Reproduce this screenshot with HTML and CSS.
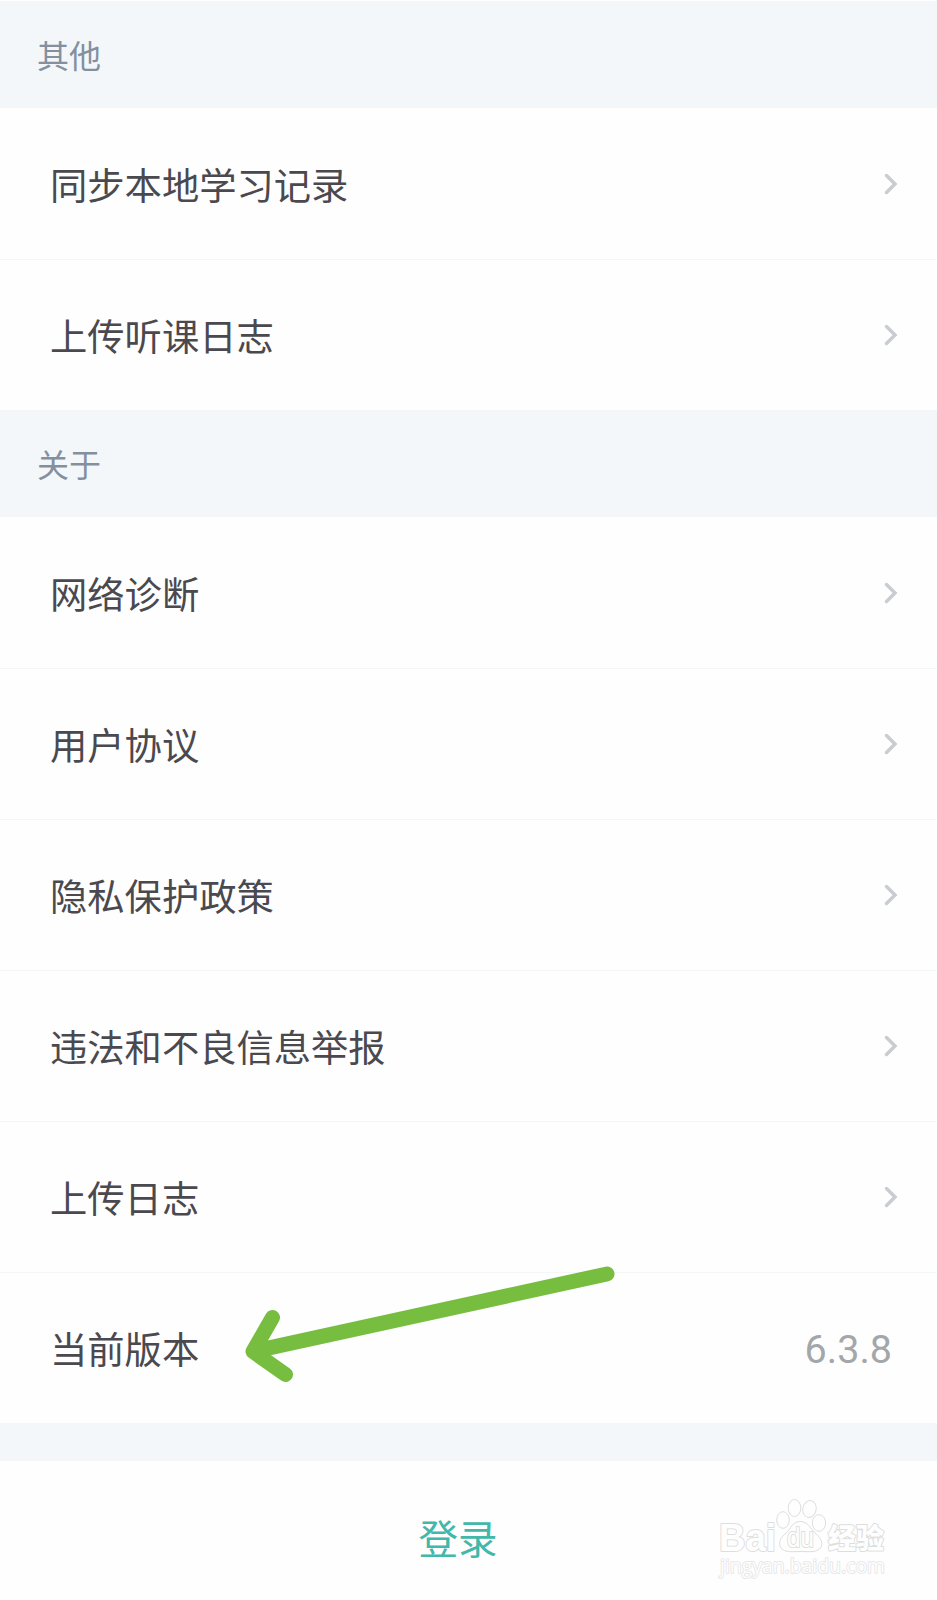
FILE: index.html
```html
<!DOCTYPE html>
<html lang="zh-CN">
<head>
<meta charset="utf-8">
<title>设置</title>
<link rel="stylesheet" href="styles.css">
</head>
<body>
<svg class="defs" width="0" height="0" aria-hidden="true">
  <symbol id="chevron" viewBox="0 0 14 22"><path d="M2.500 2.500 11 11 2.500 19.500"/></symbol>
</svg>
<main class="settings">
  <h2 class="section-title">其他</h2>
  <ul class="list">
    <li class="row"><span>同步本地学习记录</span><svg class="chevron"><use href="#chevron"/></svg></li>
    <li class="row"><span>上传听课日志</span><svg class="chevron"><use href="#chevron"/></svg></li>
  </ul>
  <h2 class="section-title">关于</h2>
  <ul class="list">
    <li class="row"><span>网络诊断</span><svg class="chevron"><use href="#chevron"/></svg></li>
    <li class="row"><span>用户协议</span><svg class="chevron"><use href="#chevron"/></svg></li>
    <li class="row"><span>隐私保护政策</span><svg class="chevron"><use href="#chevron"/></svg></li>
    <li class="row"><span>违法和不良信息举报</span><svg class="chevron"><use href="#chevron"/></svg></li>
    <li class="row"><span>上传日志</span><svg class="chevron"><use href="#chevron"/></svg></li>
    <li class="row"><span>当前版本</span><span class="version">6.3.8</span>
      <svg class="arrow" viewBox="0 0 400 150"><path d="M377 24 23 101.500M42.500 67.500 23 101.500 55.500 124.500"/></svg>
    </li>
  </ul>
  <div class="login"><span>登录</span>
    <svg class="watermark" viewBox="0 0 200 120">
      <text class="brand" x="19" y="71" textLength="57" lengthAdjust="spacingAndGlyphs">Bai</text>
      <ellipse cx="83" cy="40" rx="6.300" ry="8.300"/>
      <ellipse cx="94.500" cy="28" rx="6.300" ry="8.500"/>
      <ellipse cx="109.500" cy="29" rx="6.700" ry="8.500" transform="rotate(12 109.500 29)"/>
      <ellipse cx="119" cy="43" rx="6.700" ry="8.300"/>
      <path d="M100 41.500C108 41.500 110 48 115 53C121 58 123 62 121 67C118 73 109 71.500 101 71.500C93 71.500 85 73 81 68C78 63 80 58 86 53C91 49 92 41.500 100 41.500Z"/>
      <text class="du" x="87" y="67" textLength="27" lengthAdjust="spacingAndGlyphs">du</text>
      <text class="cjk" x="128" y="69" textLength="56" lengthAdjust="spacingAndGlyphs">经验</text>
      <text class="url" x="20" y="93" textLength="165" lengthAdjust="spacingAndGlyphs">jingyan.baidu.com</text>
    </svg>
  </div>
</main>
</body>
</html>
```

FILE: styles.css
```css
* { box-sizing: border-box; }
body {
  margin: 0;
  background: #fefefe;
  font-family: Roboto, "Noto Sans CJK SC", sans-serif;
}
.defs { position: absolute; }
.settings {
  height: 1600px;
  padding-top: 1px;
  display: flex;
  flex-direction: column;
  overflow: hidden;
}
.section-title {
  height: 107px;
  margin: 0;
  padding: 0 37px 2px;
  display: flex;
  align-items: center;
  background: #f3f7fa;
  color: #84909e;
  font-size: 32px;
  font-weight: 400;
}
.list { margin: 0; padding: 0; list-style: none; }
.row {
  position: relative;
  height: 151px;
  padding: 0 39px 0 50px;
  display: flex;
  align-items: center;
  justify-content: space-between;
  color: #4a494f;
  font-size: 37.300px;
}
.row + .row { border-top: 1px solid #f5f6f7; }
.chevron {
  width: 14px;
  height: 22px;
  fill: none;
  stroke: #c9ccd1;
  stroke-width: 3.500;
  stroke-linecap: round;
}
.version { margin: 2px 6px 0 0; color: #a3a7aa; font-size: 39.500px; }
.arrow {
  position: absolute;
  left: 230px;
  top: -23px;
  width: 400px;
  height: 150px;
  fill: none;
  stroke: #76bd40;
  stroke-width: 15;
  stroke-linecap: round;
  stroke-linejoin: round;
}
.login {
  position: relative;
  flex: 1;
  padding: 11px 0 0;
  display: flex;
  align-items: center;
  justify-content: center;
  border-top: 38px solid #f3f7fa;
  color: #41b8aa;
  font-size: 39.500px;
}
.login > span { margin-right: 21px; }
.watermark {
  position: absolute;
  left: 700px;
  top: 19px;
  width: 200px;
  height: 120px;
  fill: #fefefe;
  stroke: #dedede;
  stroke-width: 1;
}
.watermark text {
  stroke-width: 2;
  stroke-linejoin: round;
  paint-order: stroke;
}
.brand { font: 700 38px "Liberation Sans", sans-serif; }
.du { font: 400 27px "Liberation Sans", sans-serif; }
.cjk { font: 900 28px "Noto Sans CJK SC", sans-serif; }
.watermark .url { font: 400 20px "Open Sans", sans-serif; stroke: #e4e4e4; stroke-width: 1.600; }
```
